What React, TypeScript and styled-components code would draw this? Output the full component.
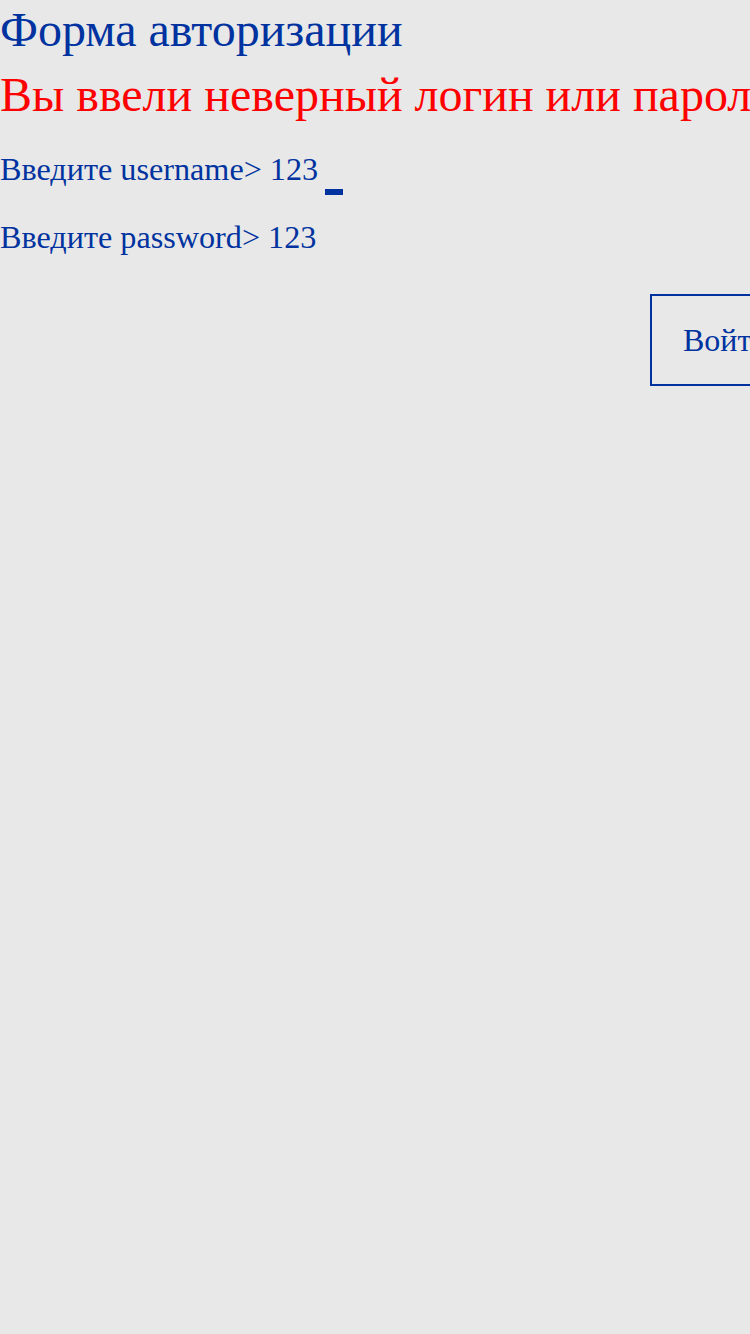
import React from "react";
import styled, { createGlobalStyle } from "styled-components";

const Global = createGlobalStyle`
  html, body { margin: 0; padding: 0; background: #e8e8e8; overflow-x: hidden; }
  body { font-family: "Liberation Serif", "Times New Roman", serif; color: #0033a0; }
`;

const Page = styled.div`
  display: flex;
  flex-direction: column;
  min-height: 1334px;
  background: #e8e8e8;
  white-space: nowrap;
`;

const Title = styled.h1`
  margin: 0;
  font-weight: normal;
  font-size: 48px;
  line-height: 60px;
  color: #0033a0;
`;

const Error = styled.div`
  font-size: 48px;
  line-height: 66px;
  color: #ff0000;
  margin-top: 2px;
  margin-bottom: 7px;
`;

const Prompt = styled.div`
  font-size: 32.2px;
  line-height: 68px;
  color: #0033a0;
  display: flex;
  align-items: baseline;
`;

const Cursor = styled.span`
  display: inline-block;
  width: 18px;
  height: 6px;
  background: #0033a0;
  margin-left: 7px;
  align-self: flex-end;
  margin-bottom: 8px;
`;

const Button = styled.button`
  margin-left: 650px;
  margin-top: 23px;
  align-self: flex-start;
  background: transparent;
  border: 2px solid #0033a0;
  color: #0033a0;
  font-family: "Liberation Serif", "Times New Roman", serif;
  font-size: 32px;
  height: 92px;
  padding: 0 31px;
  cursor: pointer;
`;

export default function App() {
  return (
    <>
      <Global />
      <Page>
        <Title>Форма авторизации</Title>
        <Error>Вы ввели неверный логин или пароль</Error>
        <Prompt>
          Введите username&gt; 123
          <Cursor />
        </Prompt>
        <Prompt>Введите password&gt; 123</Prompt>
        <Button>Войти</Button>
      </Page>
    </>
  );
}
